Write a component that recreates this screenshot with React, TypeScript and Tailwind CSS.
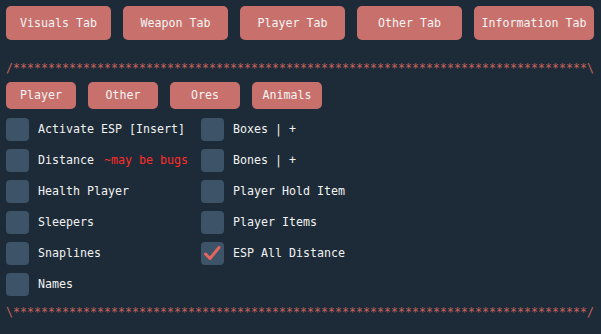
import React from "react";

const mono = { fontFamily: '"DejaVu Sans Mono", "Liberation Mono", monospace' };

const tabs = ["Visuals Tab", "Weapon Tab", "Player Tab", "Other Tab", "Information Tab"];
const subTabs = ["Player", "Other", "Ores", "Animals"];

const leftItems = [
  { label: "Activate ESP [Insert]" },
  { label: "Distance", note: "~may be bugs" },
  { label: "Health Player" },
  { label: "Sleepers" },
  { label: "Snaplines" },
  { label: "Names" },
];

const rightItems = [
  { label: "Boxes | +" },
  { label: "Bones | +" },
  { label: "Player Hold Item" },
  { label: "Player Items" },
  { label: "ESP All Distance", checked: true },
];

const Checkbox = ({
  label,
  note,
  checked,
}: {
  label: string;
  note?: string;
  checked?: boolean;
}) => (
  <div className="flex items-center h-[23px]">
    <div className="w-[23px] h-[23px] rounded-[4px] bg-[#3d5367] flex items-center justify-center shrink-0">
      {checked && (
        <svg width="23" height="23" viewBox="0 0 23 23">
          <path
            d="M4.5 12 L9 16.5 L18 5.5"
            fill="none"
            stroke="#e2665f"
            strokeWidth="3"
            strokeLinecap="round"
            strokeLinejoin="round"
          />
        </svg>
      )}
    </div>
    <span className="ml-[9px] text-[#f2f2f2] whitespace-pre">{label}</span>
    {note && <span className="ml-[10px] text-[#ff2b2b] whitespace-pre">{note}</span>}
  </div>
);

const Separator = ({ start, end }: { start: string; end: string }) => (
  <div className="h-[13px] leading-[13px] text-[#c8625e] whitespace-pre overflow-hidden">
    {start + "*".repeat(82) + end}
  </div>
);

const App = () => {
  return (
    <main
      className="w-[601px] h-[334px] bg-[#1c2b37] px-[6px] pt-[6px] text-[11.63px] leading-[13px] overflow-hidden"
      style={mono}
    >
      {/* Top tabs */}
      <div className="flex gap-[12px]">
        {tabs.map((t, i) => (
          <button
            key={t}
            className={`h-[34px] ${i === 4 ? "w-[120px]" : "w-[105px]"} rounded-[5px] bg-[#c8706c] text-[#f4f4f4] flex items-center justify-center whitespace-pre`}
          >
            {t}
          </button>
        ))}
      </div>

      <div className="mt-[22px]">
        <Separator start="/" end="\" />
      </div>

      {/* Sub tabs */}
      <div className="flex gap-[12px] mt-[7px]">
        {subTabs.map((t) => (
          <button
            key={t}
            className="h-[27px] w-[70px] rounded-[5px] bg-[#c8706c] text-[#f4f4f4] flex items-center justify-center"
          >
            {t}
          </button>
        ))}
      </div>

      {/* Options */}
      <div className="flex mt-[9px]">
        <div className="w-[195px] flex flex-col gap-[8px]">
          {leftItems.map((it) => (
            <Checkbox key={it.label} {...it} />
          ))}
        </div>
        <div className="flex flex-col gap-[8px]">
          {rightItems.map((it) => (
            <Checkbox key={it.label} {...it} />
          ))}
        </div>
      </div>

      <div className="mt-[10px]">
        <Separator start="\" end="/" />
      </div>
    </main>
  );
};

export default App;
